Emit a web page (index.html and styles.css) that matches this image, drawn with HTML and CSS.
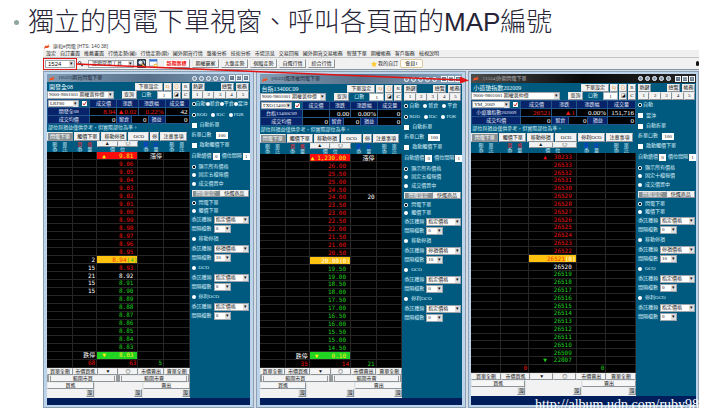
FILE: index.html
```html
<!DOCTYPE html>
<html lang="zh-Hant">
<head>
<meta charset="utf-8">
<title>閃電下單視窗</title>
<link rel="stylesheet" href="styles.css">
</head>
<body>
<h1>獨立的閃電下單視窗、呼叫各頁面的MAP編號</h1>
<main class="app">
  <header class="app-title">
    <svg class="flame" viewBox="0 0 12 10"><path d="M0 8 3 3l3 1 4-4-1 4 3 1-5 3-4 0-2 2z"/></svg>
    康和e閃電 [HTS: 140 38]
  </header>
  <nav class="menu">
    <a href="#">設定</a><a href="#">自訂畫面</a><a href="#">推薦畫面</a><a href="#">行情走勢(國)</a><a href="#">行情走勢(期)</a><a href="#">國外期貨行情</a><a href="#">盤後分析</a><a href="#">技術分析</a><a href="#">市場訊息</a><a href="#">交易回報</a><a href="#">國外期貨交易帳務</a><a href="#">智慧下單</a><a href="#">期權帳務</a><a href="#">客戶服務</a><a href="#">檢視說明</a>
  </nav>
  <div class="toolbar">
    <span class="map-box"><span class="drop"><select aria-label="MAP"><option>1524</option></select></span></span>
    <svg class="tool-small" viewBox="0 0 12 14"><circle cx="4" cy="4" r="3" fill="#fff" stroke="#26364c" stroke-width="2"/><path d="M6 6l5 6" stroke="#26364c" stroke-width="3"/></svg>
    <span class="drop tool-drop"><select aria-label="工具"><option>證期常用工具</option></select></span>
    <svg class="tool-icon" viewBox="0 0 18 18"><rect width="18" height="18" rx="2" fill="#2d3a49"/><circle cx="7" cy="7" r="4" fill="#dbe7f2"/><path d="M9 9l7 7" stroke="#e9a23b" stroke-width="3"/><path d="M11 4h4v5" stroke="#c9d6e4" stroke-width="2" fill="none"/></svg>
    <svg class="tool-icon" viewBox="0 0 18 18"><rect x="1" y="1" width="15" height="13" fill="#fff" stroke="#3465b5"/><path d="M1 1h15v4H1z" fill="#3572d0"/><circle cx="13" cy="13" r="4" fill="#f4c33c"/><path d="M11 13h4" stroke="#fff" stroke-width="2"/></svg>
    <div class="tool-tabs">
      <button class="hot">新期案標</button><button>期權贏家</button><button>大盤走勢</button><button>個股走勢</button><button>自選行情</button><button>綜合行情</button>
    </div>
    <div class="favorites">
      <svg viewBox="0 0 16 16"><path d="M8 0l2.400 5.400 5.600.6-4.200 4 1.200 6L8 13l-5 3 1.200-6L0 6l5.600-.6z" fill="#ffc928"/></svg>
      <a href="#">我的自訂</a><button>會員1</button>
    </div>
    <span class="grip"></span>
  </div>
  <div class="workspace" id="workspace"></div>
  <svg class="pointer" viewBox="0 0 656 365" aria-hidden="true"><path d="M33 22 418 38" stroke="#e01414" stroke-width="1.500"/><path d="M426 38.500l-9-4 0 7z" fill="#e01414"/></svg>
  <p class="watermark">http://album.udn.com/ruby98</p>
</main>
<script src="app.js"></script>
</body>
</html>
```
FILE: styles.css
```css
* { box-sizing: border-box; }
body {
  margin: 0;
  background: #fff;
  font: 5px/6px "Liberation Serif", "Noto Sans CJK TC", sans-serif;
  color: #222;
}
h1 {
  display: flex;
  align-items: center;
  gap: 9px;
  margin: 0;
  padding: 4px 0 2px 14px;
  font-family: "Liberation Sans", "Noto Sans CJK TC", sans-serif;
  font-size: 26px;
  line-height: 36px;
  font-weight: 300;
  color: #262436;
  white-space: nowrap;
}
h1::before {
  content: "";
  width: 5px;
  height: 5px;
  border-radius: 50%;
  background: #8fa79c;
}
button, select, input { font: inherit; margin: 0; padding: 0; color: #111; }
a { color: inherit; text-decoration: none; }
button {
  border: 1px solid #e9eaea;
  border-right-color: #8d9499;
  border-bottom-color: #8d9499;
  border-radius: 0;
  background: #f3f3f3;
  line-height: 6px;
  white-space: nowrap;
  overflow: hidden;
}
.app { position: relative; margin: 0 29px 0 43px; overflow: hidden; }
.app-title { display: flex; align-items: center; gap: 3px; height: 8px; font-family: "Liberation Sans", "Noto Sans CJK TC", sans-serif; color: #444; }
.flame { width: 6px; height: 5px; fill: #ee5424; flex: none; }
.app-title .flame { margin-left: 1px; }
.menu { display: flex; gap: 4px; height: 8px; padding-left: 3px; line-height: 7px; background: #f0f0f0; border-bottom: 1px solid #c4c4c4; white-space: nowrap; }
.toolbar { display: flex; align-items: center; height: 11px; background: #f1f1f1; }
.map-box { display: flex; width: 34px; height: 12px; padding: 1px; border: 1px solid #dc1c1c; }
.drop { position: relative; display: flex; flex: 1; min-width: 0; height: 8px; border: 1px solid #9ca6ac; background: #fff; }
.drop select { width: 100%; appearance: none; border: 0; border-radius: 0; background: none; line-height: 6px; padding-left: 1px; }
.drop::after { content: "▾"; position: absolute; top: 0; right: 0; width: 5px; height: 6px; background: #dedede; color: #111; text-align: center; line-height: 6px; pointer-events: none; }
.map-box .drop select { font-family: "Liberation Sans", sans-serif; font-size: 6px; padding-left: 2px; }
.tool-small { width: 5px; height: 6px; margin: 0 5px 0 1px; }
.tool-drop { flex: none; width: 46px; }
.tool-drop select { padding-left: 3px; }
.tool-icon { width: 9px; height: 9px; margin-left: 3px; }
.tool-tabs { display: flex; gap: 2px; margin-left: 5px; }
.tool-tabs button { width: 27px; height: 9px; }
.tool-tabs .hot { color: #f01010; font-weight: bold; background: #fff; }
.favorites { display: flex; align-items: center; gap: 1px; margin-left: 36px; white-space: nowrap; }
.favorites svg { width: 6px; height: 6px; }
.favorites button { width: 23px; height: 9px; margin-left: 1px; border: 1px solid #dcc9a0; border-radius: 2px; background: #fffdf6; }
.grip { width: 3px; height: 5px; margin-left: auto; border-radius: 2px; background: #111; }

.workspace { display: flex; gap: 2px; padding-top: 1px; background: #d5dde4; border-top: 1px solid #8796a3; }
.window {
  display: flex;
  flex-direction: column;
  flex: 210 1 0;
  min-width: 0;
  padding: 2px 3px;
  border: 1px solid #8ba0b4;
  background: #bdd3e9;
}
.window.wide { flex-grow: 233; padding-right: 2px; padding-left: 2px; }
.titlebar { display: flex; align-items: center; height: 8px; padding-left: 2px; background: linear-gradient(90deg, #829db6, #58708a 50%, #8ba6bf); color: #1c2733; white-space: nowrap; }
.low .titlebar { height: 10px; }
.wide .titlebar { height: 9px; background: linear-gradient(90deg, #4c4c4c, #080808 50%, #272727); color: #b4b4b4; }
.titlebar .flame { margin-right: 4px; }
.orbs { display: flex; gap: 2px; margin-left: auto; }
.orbs i { width: 5px; height: 5px; border: 1px solid #f2f7fb; border-radius: 50%; background: #8297ab; }
.controls { display: flex; gap: 1px; margin: 0 1px 0 4px; }
.controls button { width: 6px; height: 6px; border: 1px solid #f4f6f8; background: #62778b; color: #fff; line-height: 4px; }
.content { display: flex; background: #005a80; color: #d6edf6; }
.trade { flex: 1; min-width: 0; }
.options { flex: none; width: 60px; }
.line { display: flex; align-items: center; height: 9px; gap: 1px; white-space: nowrap; }
.account { height: 8px; }
.product { flex: 1; padding-left: 2px; font-size: 6px; line-height: 8px; color: #e6f7fc; }
.line button { width: 8px; height: 8px; flex: none; }
.line .settings { width: 28px; }
.line .query { width: 15px; margin-left: 7px; }
.account label { margin: 0 4px; }
.account .drop { flex: 1; }
.qty { width: 15px; height: 8px; border: 1px solid #9fb0ba; background: #fff; text-align: center; }
.line .gold { color: #cf7a10; }
table { width: 100%; border-collapse: collapse; table-layout: fixed; }
th, td { padding: 0; font-weight: normal; overflow: hidden; white-space: nowrap; }
.quote { height: 25px; }
.quote tr { height: 8px; }
.quote th { background: #07246b; border: 1px solid #22568a; color: #e2edf8; text-align: center; line-height: 6px; }
.quote td { background: #000; border: 1px solid #22568a; color: #fff; text-align: right; font: 7px/6px "Liberation Serif", serif; padding-right: 1px; }
.quote .pick { background: #005a80; padding: 0; font: inherit; }
.pick div { display: flex; align-items: center; gap: 3px; padding-right: 2px; height: 7px; }
.pick .drop { height: 7px; }
.pick select { line-height: 5px; height: 5px; }
.quote .up { color: #f01818; }
.note { margin: 0; height: 8px; padding-left: 1px; line-height: 8px; white-space: nowrap; }
.tabs { display: flex; height: 9px; gap: 1px; padding-right: 3px; }
.tabs button { flex: 27 1 0; min-width: 0; }
.tabs button:nth-child(4) { flex-grow: 21; }
.tabs button:nth-child(5) { flex-grow: 8; }
.wide .tabs button:nth-child(5) { flex-grow: 27; }
.tabs .on, .mode .on { background: #888f92; color: #fff; }
.heads { height: 11px; }
.heads th { line-height: 5px; height: 11px; color: #c5e3ef; }
.heads div { display: flex; }
.heads button { flex: 1; height: 6px; line-height: 4px; }
.heads .buy { color: #ff2020; }
.heads .sell { color: #1236e0; }
.heads small { display: block; font-size: 5px; color: #c5e3ef; }
.ladder { height: 216px; background: #000; }
.low .ladder { height: 214px; }
.wide .ladder { height: 220px; }
.ladder td { border: 1px solid #262626; border-width: 0 1px 1px 0; font: 6px/6px "DejaVu Sans Mono", "Noto Sans CJK TC", monospace; text-align: right; color: #fff; height: 7px; padding-right: 1px; }
.ladder .price { padding-right: 4px; }
.ladder .up { color: #ee1111; }
.ladder .down { color: #1ed41e; }
.ladder .top { background: #f80c0c; color: #ffee18; }
.ladder .bottom { background: #22d422; color: #ffee18; }
.ladder .now { background: #ffc20e; color: #f8300c; padding-right: 0; }
.ladder .now b { font-weight: normal; color: #22c222; }
.ladder .now.plain, .ladder .now.plain b, .wide .now b { color: #fff; }
.ladder .sum { padding-right: 1px; }
.mark { float: left; margin-left: 5px; }
.low .mark { margin-left: 1px; }
.low .bottom .mark { margin-left: 5px; }
.wide .mark { margin-left: 14px; }
.actions { display: grid; grid-template-columns: 36fr 35fr 28fr 28fr 36fr 36fr; background: #c6ccd0; }
.actions button, .range button { height: 7px; line-height: 5px; }
.range { display: grid; grid-template-columns: 1fr 1fr; gap: 2px; padding: 0 1px; background: #8f989d; }
.range button { border-left: 3px double #999; border-right: 3px double #999; }
.orders { display: grid; grid-template-columns: 1fr 1fr 1fr; gap: 1px; background: #dfe2e4; }
.orders div { display: grid; grid-template-rows: 7px 9px; justify-items: end; background: #f2f2f2; }
.orders button { width: 8px; height: 8px; background: #c9cdd0; }
.orders .send { width: 100%; height: 7px; line-height: 5px; background: #f6f6f6; }
.status { flex: 1; min-height: 7px; background: #001e5c; }

.opt { display: flex; align-items: center; height: 10px; padding: 0 1px 0 2px; gap: 2px; white-space: nowrap; }
.opt label { display: flex; align-items: center; gap: 1px; }
.opt button { height: 8px; width: 11px; }
.opt .key { width: 13px; }
.opt .key:first-child { margin-right: auto; }
.short { height: 8px; }
.mid { height: 9px; }
.tall { height: 11px; }
.roomy { height: 12px; }
.digits { gap: 0; }
.digits button { flex: 1; }
.choices { gap: 0; }
.choices label { gap: 0; }
.spread { gap: 4px; }
.solo label { gap: 3px; }
.opt input { flex: none; appearance: none; width: 4px; height: 4px; border: 0; border-radius: 50%; background: #fff; }
.opt input[type=radio]:checked { background: radial-gradient(#111 0 1px, #fff 1px); }
.opt input[type=checkbox] { width: 5px; height: 5px; border-radius: 0; }
.opt input[type=text] { width: 7px; height: 7px; border-radius: 0; text-align: center; }
.opt input[type=text].lots { width: 12px; margin-left: 3px; }
.mode { gap: 0; height: 10px; }
.mode button { flex: 1; height: 7px; line-height: 5px; }
.opt .drop { flex: 1; }
.opt .drop.small { flex: none; width: 17px; }
.watermark { position: absolute; left: 75%; bottom: -4px; margin: 0; font: 14px/15px "Liberation Serif", serif; color: #fff; white-space: nowrap; }
.pointer { position: absolute; top: 0; left: 0; width: 100%; pointer-events: none; }
```
FILE: app.js
```js
const range = (from, count, step, digits) =>
  Array.from({ length: count }, (_, i) => (from - i * step).toFixed(digits));

const windows = [
  {
    cls: "", title: "[0522]期貨閃電下單", product: "開發全08", code: "LRF80",
    quote: ["8.94", "▲0.02", "0.22%", "42"],
    top: "9.81", bottom: "8.03", now: "8.94", nowQty: "(4)", flat: "8.92",
    above: range(9.06, 12, 0.01, 2),
    below: range(8.93, 11, 0.01, 2), firstBelow: "up",
    left: { "8.94": "2", "8.93": "15", "8.92": "21", "8.91": "15", "8.90": "15" },
    right: {}, sums: ["68", "63", "5"], limits: true,
    sides: ["自動", "新倉", "平倉", "當沖"], types: ["ROD", "IOC", "FOK"], levels: "五"
  },
  {
    cls: "low", title: "[0523]選擇權閃電下單", product: "台指13400C09", code: "TXO13400I0",
    quote: ["", "0.00", "0.00%", "0"],
    top: "1,230.00", bottom: "0.10", now: "20.00", nowQty: "(0)", plain: true,
    above: range(26, 12, 0.5, 2), below: range(19.5, 11, 0.5, 2),
    left: {}, right: { "24.00": "20" }, sums: ["35", "14", "21"], limits: true,
    sides: ["自動", "新倉", "平倉"], types: ["ROD", "IOC", "FOK"], levels: "五"
  },
  {
    cls: "wide", title: "[1524]外期閃電下單", product: "小道瓊指數202009", code: "YM_2009",
    quote: ["26521", "▲1", "0.00%", "151,716"],
    top: "30233", bottom: "22807", now: "26521", nowQty: "(0)", flat: "26520",
    above: range(26533, 12, 1, 0), below: range(26520, 12, 1, 0),
    left: {}, right: {}, sums: ["0", "", "0"], limits: false,
    sides: ["自動"], types: null, levels: "十"
  }
];

const flame = '<svg class="flame" viewBox="0 0 12 10"><path d="M0 8 3 3l3 1 4-4-1 4 3 1-5 3-4 0-2 2z"/></svg>';
const drop = (text, label, cls = "") =>
  `<span class="drop ${cls}"><select aria-label="${label}"><option>${text}</option></select></span>`;
const radios = (names, group) => names.map((n, i) =>
  `<label><input type="radio" name="${group}" ${i ? "" : "checked"}>${n}</label>`).join("");
const row = (cls, html) => `<div class="opt ${cls}">${html}</div>`;
const check = text => row("solo", `<label><input type="checkbox">${text}</label>`);

function ladderRow(w, price, cls, before = "", text = price) {
  let left = w.left[price] || "", right = w.right[price] || "";
  if (w.limits && price === w.top) right = "漲停";
  if (w.limits && price === w.bottom) left = "跌停";
  return `<tr><td></td><td>${left}</td><td class="price ${cls}">${before}${text}</td><td>${right}</td><td></td></tr>`;
}

function ladder(w) {
  const mark = s => `<span class="mark">${s}</span>`;
  const rows = [
    ladderRow(w, w.top, w.limits ? "top" : "up", mark("▲")),
    ...w.above.map(p => ladderRow(w, p, "up")),
    ladderRow(w, w.now, "now" + (w.plain ? " plain" : ""), "", `${w.now}<b>${w.nowQty}</b>`),
    ...w.below.map((p, i) => ladderRow(w, p, p === w.flat ? "" : (i === 0 && w.firstBelow) || "down")),
    ladderRow(w, w.bottom, w.limits ? "bottom" : "down", mark("▼"))
  ];
  return rows.join("") + `<tr><td></td><td class="up">${w.sums[0]}</td><td class="sum up">${w.sums[1]}</td><td class="down">${w.sums[2]}</td><td></td></tr>`;
}

const cols = widths => `<colgroup>${widths.map(x => `<col style="width:${x}%">`).join("")}</colgroup>`;
const ladderCols = cols([18, 17, 29, 18, 18]);

function trade(w, id) {
  const [price, change, pct, volume] = w.quote;
  const up = price ? "up" : "";
  const flatPct = pct === "0.00%" ? "" : "up";
  return `<section class="trade">
    <div class="line"><span class="product">${w.product}</span><button class="settings">下單設定</button><button class="gold">Q</button><button class="gold">⊙</button><button>R</button></div>
    <div class="line account">${drop("9000-9801001 期權黃仲偉", "帳號")}<button class="query">查詢</button><label for="qty${id}">口數</label><input class="qty" id="qty${id}" value="1"><button>◪</button><button>C</button></div>
    <table class="quote">${cols([30, 19, 10, 5, 7, 12, 17])}
      <tr><td class="pick"><div>${drop(w.code, "商品")}<svg width="5" height="5" viewBox="0 0 10 10"><path fill="#fff" d="M0 0h10v10H0z"/><path d="M2 5l2 3 5-7" stroke="#c22" stroke-width="2" fill="none"/></svg></div></td><th>成交價</th><th colspan="2">漲跌</th><th colspan="2">漲跌幅</th><th>成交量</th></tr>
      <tr><th>${w.product}</th><td class="up">${price}</td><td colspan="2" class="${up}">${change}</td><td colspan="2" class="${flatPct}">${pct}</td><td>${volume}</td></tr>
      <tr><th>成交均價</th><td>0</td><th>留倉</th><td colspan="2">0</td><th>損益</th><td>0</td></tr>
    </table>
    <p class="note">部位與損益僅供參考，但實際部位為準。</p>
    <div class="tabs"><button class="on">閃電下單</button><button>觸價下單</button><button>移動停損</button><button>OCO</button><button>${w.limits ? "停" : "停利OCO"}</button><button>注意事項</button></div>
    <table class="heads">${ladderCols}<tr><th>刪　單<br>委　託</th><th class="buy">買　進<small>委　量</small></th><th><div><button>▲</button><button>◎</button></div>價　位</th><th class="sell">賣　出<small>委　量</small></th><th>刪　單<br>委　託</th></tr></table>
    <table class="ladder">${ladderCols}${ladder(w)}</table>
    <div class="actions"><button>買單全刪</button><button>市價買進</button><button>▼</button><button>◎</button><button>市價賣出</button><button>賣單全刪</button></div>
    ${w.limits ? '<div class="range"><button>範圍市買</button><button>範圍市賣</button></div>' : ""}
    <div class="orders"><div><button class="send">買進</button><button>設</button></div><div><span></span><button>設</button></div><div><button class="send">賣出</button><button>設</button></div></div>
  </section>`;
}

function options(w, id) {
  const group = (name, kind, gap, cls = "tall") =>
    (name ? row(cls + " solo", `<label><input type="radio" name="mode${id}">${name}</label>`) : "") +
    row("mid", "委託種類" + drop(kind, "委託種類")) +
    row("mid", "間隔檔數" + drop(gap, "間隔檔數", "small"));
  return `<aside class="options">` +
    row("mid", '<button class="key">熱鍵</button><button class="key">總覽</button><button class="key">帳務</button>') +
    row("short digits", [1, 2, 3, 4, 5].map(n => `<button>${n}</button>`).join("")) +
    row(w.sides.length > 3 ? "choices" : "spread", radios(w.sides, "side" + id)) +
    (w.types ? row("tall spread", radios(w.types, "type" + id)) : row("tall solo", '<label><input type="checkbox">當沖</label>')) +
    check("自動拆單") +
    row("", `<label>拆單口數<input type="text" class="lots" value="100"></label>`) +
    check("啟動觸價下單") +
    row("roomy", '<label>自動續價<input type="text" value="0"></label><label>價位間隔<input type="text" value="1"></label>') +
    row("mid solo", radios(["顯示所有價格"], "view" + id)) +
    row("short solo", `<label><input type="radio" name="view${id}">固定${w.levels}檔報價</label>`) +
    row("mid solo", `<label><input type="radio" name="view${id}">成交價置中</label>`) +
    row("mode", '<button class="on">閃電設定</button><button>快選商品</button>') +
    row("mid solo", radios(["閃電下單"], "mode" + id)) +
    row("short solo", `<label><input type="radio" name="mode${id}">觸價下單</label>`) +
    group("", "指定價格", "0") +
    group("移動停損", "停損價格", "10") +
    group("OCO", "指定價格", "0") +
    group("停利OCO", "指定價格", "0") +
    `</aside>`;
}

document.getElementById("workspace").innerHTML = windows.map((w, id) => `
  <article class="window ${w.cls}">
    <div class="titlebar">${flame}${w.title}<span class="orbs"><i></i><i></i><i></i><i></i><i></i></span>
      <span class="controls"><button aria-label="最小化">-</button><button aria-label="最大化">□</button><button aria-label="關閉">×</button></span></div>
    <div class="content">${trade(w, id)}${options(w, id)}</div>
    <div class="status"></div>
  </article>`).join("");
```
